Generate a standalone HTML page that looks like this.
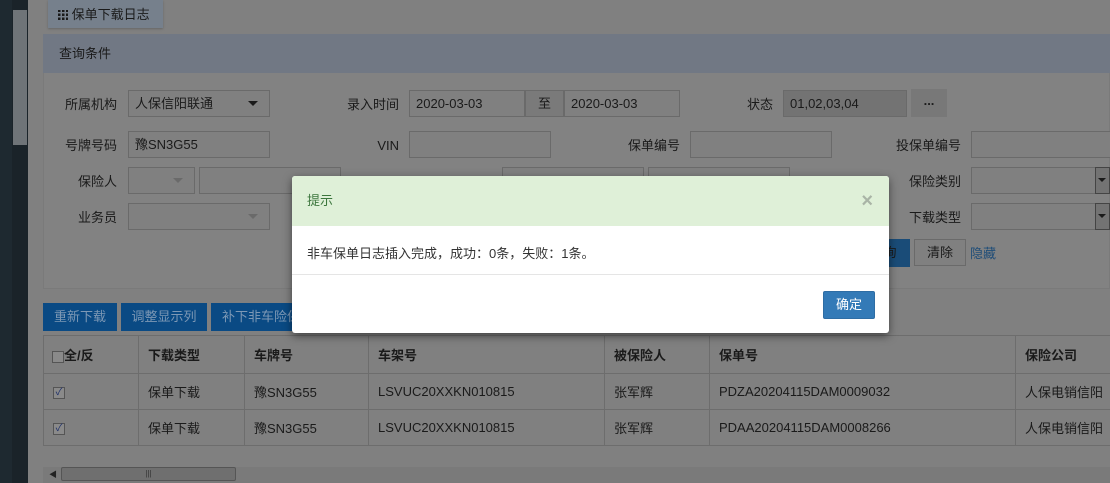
<!DOCTYPE html>
<html><head><meta charset="utf-8"><style>
*{box-sizing:border-box;margin:0;padding:0}
body{width:1110px;height:483px;overflow:hidden;background:#808080;font-family:"Liberation Sans","Noto Sans CJK SC",sans-serif;font-size:13px;color:#1c1c1c;position:relative}
.a{position:absolute}
.inp{position:absolute;height:27px;border:1px solid #6a6a6a;background:#808080;padding:0 6px;line-height:25px;font-size:13px;color:#1a1a1a}
.lbl{position:absolute;text-align:right;width:90px;font-size:13px;color:#1a1a1a;line-height:27px}
.caret{position:absolute;width:0;height:0;border-left:5px solid transparent;border-right:5px solid transparent;border-top:5px solid #1a1a1a}
.caretl{border-top-color:#6a6a6a}
.btn{position:absolute;background:#0a4a84;color:#7d98b5;height:28px;line-height:28px;text-align:center;font-size:13px}
td{border:1px solid #6d6d6d;height:36px;padding-left:9px;font-size:13px;color:#1a1a1a;white-space:nowrap;overflow:hidden}
table{border-collapse:collapse;position:absolute;left:43px;top:335px;table-layout:fixed;width:1090px}
.cb{display:inline-block;width:12px;height:12px;border:1px solid #555;background:#8a8a8a;vertical-align:middle;font-size:10px;line-height:10px;text-align:center;color:#1d2f6a}
</style></head><body>
<div class="a" style="left:0;top:0;width:28px;height:483px;background:#1e2930"></div>
<div class="a" style="left:12px;top:0;width:16px;height:483px;background:#1a2329"></div>
<div class="a" style="left:13px;top:10px;width:14px;height:135px;background:#6f7478"></div>
<div class="a" style="left:48px;top:0;width:115px;height:28px;background:#76808c;box-shadow:0 1px 2px #666;line-height:30px;padding-left:10px;font-size:13px;color:#1a1a1a"><span style="display:inline-block;width:10px;height:10px;vertical-align:-1px;background:repeating-linear-gradient(90deg,#1a1a1a 0 2.5px,transparent 2.5px 4px),transparent;-webkit-mask:repeating-linear-gradient(0deg,#000 0 2.5px,transparent 2.5px 4px)"></span> 保单下载日志</div>
<div class="a" style="left:43px;top:34px;width:1067px;height:255px;background:#828282;border:1px solid #7a7a7a"></div>
<div class="a" style="left:43px;top:34px;width:1067px;height:39px;background:#717884;line-height:39px;padding-left:16px;color:#1a1a1a">查询条件</div>

<div class="lbl" style="left:27px;top:91px">所属机构</div>
<div class="inp" style="left:128px;top:90px;width:142px">人保信阳联通</div><div class="caret" style="left:248px;top:101px"></div>
<div class="lbl" style="left:309px;top:91px">录入时间</div>
<div class="inp" style="left:409px;top:90px;width:116px">2020-03-03</div>
<div class="inp" style="left:525px;top:90px;width:39px;background:#7a7a7a;text-align:center;padding:0">至</div>
<div class="inp" style="left:564px;top:90px;width:116px">2020-03-03</div>
<div class="lbl" style="left:683px;top:91px">状态</div>
<div class="inp" style="left:783px;top:90px;width:124px;background:#737373">01,02,03,04</div>
<div class="a" style="left:911px;top:89px;width:36px;height:28px;background:#787878;text-align:center;line-height:24px;font-weight:bold">...</div>

<div class="lbl" style="left:27px;top:132px">号牌号码</div>
<div class="inp" style="left:128px;top:131px;width:142px">豫SN3G55</div>
<div class="lbl" style="left:309px;top:132px">VIN</div>
<div class="inp" style="left:409px;top:131px;width:142px"></div>
<div class="lbl" style="left:590px;top:132px">保单编号</div>
<div class="inp" style="left:690px;top:131px;width:142px"></div>
<div class="lbl" style="left:871px;top:132px">投保单编号</div>
<div class="inp" style="left:971px;top:131px;width:145px"></div>

<div class="lbl" style="left:27px;top:168px">保险人</div>
<div class="inp" style="left:128px;top:167px;width:67px"></div><div class="caret caretl" style="left:173px;top:178px"></div>
<div class="inp" style="left:199px;top:167px;width:142px"></div>
<div class="inp" style="left:502px;top:167px;width:142px"></div>
<div class="inp" style="left:648px;top:167px;width:142px"></div>
<div class="lbl" style="left:871px;top:168px">保险类别</div>
<div class="inp" style="left:971px;top:167px;width:145px"></div>
<div class="a" style="left:1095px;top:167px;width:15px;height:27px;background:#737373;border:1px solid #444"></div><div class="caret" style="left:1098px;top:178px;border-width:4px 4px 0"></div>

<div class="lbl" style="left:27px;top:204px">业务员</div>
<div class="inp" style="left:128px;top:203px;width:142px"></div><div class="caret caretl" style="left:248px;top:214px"></div>
<div class="lbl" style="left:871px;top:204px">下载类型</div>
<div class="inp" style="left:971px;top:203px;width:145px"></div>
<div class="a" style="left:1095px;top:203px;width:15px;height:27px;background:#737373;border:1px solid #444"></div><div class="caret" style="left:1098px;top:214px;border-width:4px 4px 0"></div>

<div class="btn" style="left:870px;top:239px;width:40px;background:#1a4c78;color:#1a1a1a">询</div>
<div class="inp" style="left:914px;top:239px;width:52px;text-align:center;padding:0;line-height:26px">清除</div>
<div class="a" style="left:970px;top:243px;color:#1f4d78">隐藏</div>

<div class="btn" style="left:43px;top:303px;width:74px">重新下载</div>
<div class="btn" style="left:121px;top:303px;width:86px">调整显示列</div>
<div class="btn" style="left:211px;top:303px;width:100px">补下非车险保</div>

<table>
<colgroup><col style="width:95px"><col style="width:106px"><col style="width:124px"><col style="width:236px"><col style="width:105px"><col style="width:306px"><col></colgroup>
<tr style="font-weight:bold"><td style="padding-left:8px;height:38px"><span class="cb"></span>全/反</td><td>下载类型</td><td>车牌号</td><td>车架号</td><td>被保险人</td><td>保单号</td><td>保险公司</td></tr>
<tr><td><span class="cb">✓</span></td><td>保单下载</td><td>豫SN3G55</td><td>LSVUC20XXKN010815</td><td>张军辉</td><td>PDZA20204115DAM0009032</td><td>人保电销信阳</td></tr>
<tr><td><span class="cb">✓</span></td><td>保单下载</td><td>豫SN3G55</td><td>LSVUC20XXKN010815</td><td>张军辉</td><td>PDAA20204115DAM0008266</td><td>人保电销信阳</td></tr>
</table>

<div class="a" style="left:43px;top:467px;width:1067px;height:16px;background:#7a7a7a"></div>
<div class="a" style="left:49px;top:469px;font-size:8px;color:#222">◀</div>
<div class="a" style="left:61px;top:467px;width:175px;height:14px;background:#6f6f6f;border:1px solid #555;border-radius:2px;text-align:center;font-size:8px;line-height:12px;color:#333">|||</div>

<div class="a" style="left:292px;top:176px;width:597px;height:157px;background:#fff;border-radius:3px;box-shadow:0 3px 9px rgba(0,0,0,.5);overflow:hidden">
<div style="height:50px;background:#dff0d8;color:#3c763d;line-height:50px;padding-left:15px;font-size:13px">提示<span style="position:absolute;right:16px;top:0;color:#a9b4a6;font-size:20px;font-weight:bold">×</span></div>
<div style="height:49px;border-bottom:1px solid #e5e5e5;padding:17px 15px;font-size:13px;color:#333">非车保单日志插入完成<span style="letter-spacing:0">，</span>成功：0条<span>，</span>失败：1条。</div>
<div class="a" style="left:531px;top:115px;width:52px;height:28px;background:#337ab7;border:1px solid #2e6da4;border-radius:2px;color:#fff;text-align:center;line-height:26px">确定</div>
</div>
</body></html>
